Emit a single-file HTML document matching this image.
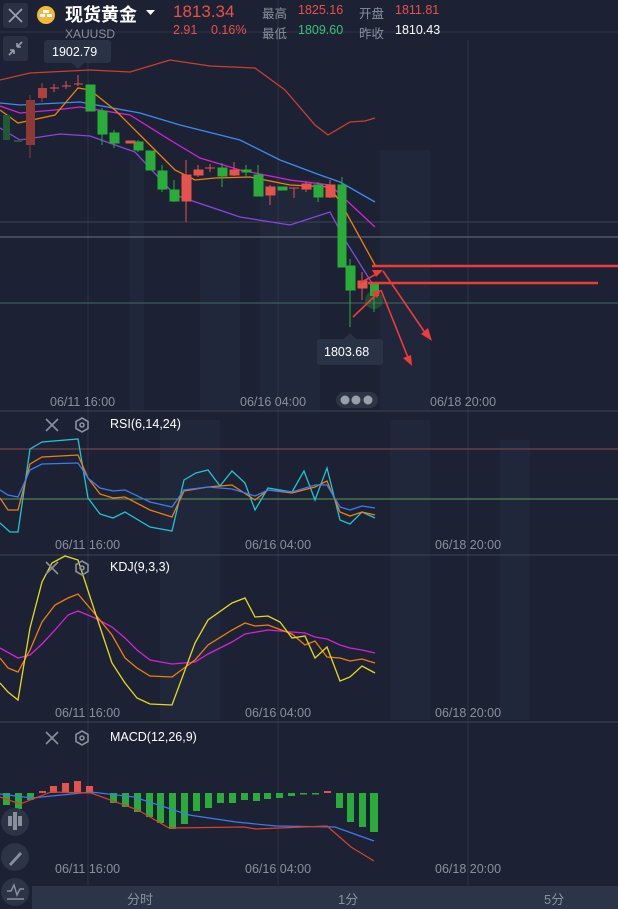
<!DOCTYPE html>
<html><head><meta charset="utf-8"><style>
html,body{margin:0;padding:0;background:#1c2234;}
body{width:618px;height:909px;position:relative;overflow:hidden;font-family:"Liberation Sans","Noto Sans CJK SC",sans-serif;}
.t{position:absolute;white-space:nowrap;}
</style></head><body>
<svg width="618" height="909" style="position:absolute;left:0;top:0" xmlns="http://www.w3.org/2000/svg">
<rect width="618" height="909" fill="#1c2234"/>
<g fill="#20273a">
<rect x="130" y="160" width="14" height="250"/><rect x="200" y="240" width="40" height="170"/><rect x="260" y="180" width="60" height="230"/><rect x="380" y="150" width="50" height="260"/><rect x="160" y="420" width="60" height="300"/><rect x="390" y="420" width="40" height="300"/><rect x="500" y="440" width="30" height="280"/>
</g>
<g stroke="#2c3446" stroke-width="1">
<line x1="88" y1="40" x2="88" y2="885"/><line x1="278" y1="0" x2="278" y2="885"/><line x1="468" y1="40" x2="468" y2="885"/>
<line x1="0" y1="32" x2="618" y2="32"/>
</g>
<line x1="0" y1="222" x2="618" y2="222" stroke="#3a4152"/>
<line x1="0" y1="237" x2="618" y2="237" stroke="#6b717d"/>
<line x1="0" y1="303" x2="618" y2="303" stroke="#3f6a66"/>
<g stroke="#3d4456"><line x1="0" y1="411" x2="618" y2="411"/><line x1="0" y1="555" x2="618" y2="555"/><line x1="0" y1="722" x2="618" y2="722"/></g>
<line x1="0" y1="449" x2="618" y2="449" stroke="#8a4d52"/>
<line x1="0" y1="499" x2="618" y2="499" stroke="#5a9a5a"/>
<g fill="none" stroke-width="1.3">
<polyline stroke="#c8402e" points="0,80 30,73 90,70 130,72 170,60 210,66 255,68 285,90 315,125 328,135 350,122 365,121 375,118"/>
<polyline stroke="#3d8bf0" points="0,103 20,105 80,102 140,113 180,125 240,140 280,160 320,175 340,182 375,202"/>
<polyline stroke="#d422d4" points="0,106 20,113 55,110 80,107 130,115 170,140 200,158 240,170 290,180 330,185 375,227"/>
<polyline stroke="#8a45e0" points="0,128 20,140 60,134 90,136 135,152 175,195 240,217 290,225 330,212 345,240 375,288"/>
<polyline stroke="#f07e10" points="0,110 18,123 55,115 78,88 90,90 115,110 140,135 175,170 195,180 215,178 250,177 290,185 330,187 342,205 375,265"/>
</g>
<g>
<rect x="3" y="115" width="7" height="25" fill="#1f5a34"/>
<rect x="14" y="140" width="8" height="2" fill="#1f5a34"/>
<line x1="30" y1="95" x2="30" y2="158" stroke="#8b3a36"/><rect x="26" y="100" width="9" height="45" fill="#8b3a36"/>
<line x1="42" y1="83" x2="42" y2="102" stroke="#b04040"/><rect x="38" y="88" width="9" height="10" fill="#b04040"/>
<g stroke="#e5534b"><line x1="50" y1="88" x2="59" y2="88"/><line x1="54" y1="84" x2="54" y2="92"/><line x1="62" y1="86" x2="71" y2="86"/><line x1="66" y1="81" x2="66" y2="89"/><line x1="74" y1="84" x2="83" y2="84"/><line x1="78" y1="75" x2="78" y2="86"/></g>
</g>
<g fill="#2aac3a" stroke="#2aac3a">
<rect x="86" y="85" width="9" height="26"/>
<line x1="102" y1="108" x2="102" y2="145"/><rect x="98" y="111" width="9" height="23"/>
<line x1="114" y1="130" x2="114" y2="148"/><rect x="110" y="133" width="9" height="10"/>
<rect x="134" y="142" width="9" height="8"/><line x1="138" y1="140" x2="138" y2="152"/>
<rect x="146" y="151" width="9" height="19"/>
<rect x="158" y="171" width="9" height="18"/><line x1="162" y1="165" x2="162" y2="192"/>
<rect x="170" y="190" width="9" height="11"/><line x1="174" y1="180" x2="174" y2="202"/>
<rect x="218" y="168" width="9" height="8"/><line x1="222" y1="163" x2="222" y2="187"/>
<rect x="242" y="170" width="9" height="2"/><line x1="246" y1="165" x2="246" y2="178"/>
<rect x="254" y="175" width="9" height="21"/><line x1="258" y1="165" x2="258" y2="196"/>
<rect x="278" y="187" width="9" height="3"/>
<rect x="314" y="185" width="9" height="12"/><line x1="318" y1="182" x2="318" y2="202"/>
<rect x="338" y="185" width="8" height="82"/><line x1="342" y1="177" x2="342" y2="267"/>
<rect x="346" y="266" width="9" height="24"/><line x1="350" y1="259" x2="350" y2="327"/>
</g>
<g fill="#e5534b" stroke="#e5534b">
<rect x="126" y="141" width="9" height="2"/>
<line x1="186" y1="160" x2="186" y2="222"/><rect x="182" y="175" width="9" height="26"/>
<rect x="194" y="170" width="9" height="5"/><line x1="198" y1="165" x2="198" y2="177"/>
<line x1="205" y1="168" x2="215" y2="168"/><line x1="210" y1="164" x2="210" y2="172"/>
<rect x="230" y="170" width="9" height="5"/><line x1="234" y1="162" x2="234" y2="176"/>
<rect x="266" y="187" width="9" height="8"/><line x1="270" y1="185" x2="270" y2="205"/>
<line x1="289" y1="188" x2="299" y2="188"/><line x1="294" y1="188" x2="294" y2="198"/>
<rect x="302" y="184" width="9" height="5"/><line x1="306" y1="181" x2="306" y2="192"/>
<rect x="326" y="185" width="9" height="12"/><line x1="330" y1="180" x2="330" y2="198"/>
<rect x="358" y="281" width="9" height="7"/><line x1="362" y1="272" x2="362" y2="300"/>
</g>
<circle cx="374" cy="300" r="9" fill="#2aac3a" opacity="0.3"/>
<rect x="370" y="282" width="9" height="14" fill="#2aac3a"/><line x1="374" y1="282" x2="374" y2="312" stroke="#2aac3a"/>
<g stroke="#f03a3a" stroke-width="2.5" fill="none">
<line x1="372" y1="266" x2="618" y2="266"/><line x1="368" y1="283" x2="598" y2="283"/>
</g>
<g stroke="#f03a3a" stroke-width="1.6" fill="#f03a3a">
<line x1="383" y1="271" x2="428" y2="337"/><polygon points="432,341 421,334 428,328" stroke="none"/>
<line x1="381" y1="290" x2="409" y2="360"/><polygon points="412,366 403,358 411,355" stroke="none"/>
<line x1="360" y1="283" x2="380" y2="272"/><polygon points="383,270 372,270 376,277" stroke="none"/>
<line x1="353" y1="317" x2="378" y2="293"/><polygon points="381,290 371,292 377,298" stroke="none"/>
</g>
<rect x="44" y="40" width="67" height="23" rx="3" fill="#2a3246"/><polygon points="72,63 78,69 84,63" fill="#2a3246"/>
<polygon points="344,339 350,333 356,339" fill="#2a3246"/>
<rect x="317" y="339" width="66" height="26" rx="3" fill="#2a3246"/>
<rect x="336" y="392" width="42" height="16" rx="8" fill="#2c3446"/>
<g fill="#9aa0ab"><circle cx="345" cy="400" r="4.5"/><circle cx="356" cy="400" r="4.5"/><circle cx="368" cy="400" r="4.5"/></g>
<g fill="none" stroke-width="1.3">
<polyline stroke="#20c4d4" points="0,523 10,532 18,532 30,449 42,442 78,439 88,498 100,514 113,518 125,512 150,527 172,531 184,480 196,473 208,470 220,486 232,471 245,483 255,510 268,488 292,492 304,471 315,500 327,468 340,520 350,524 362,512 375,518"/>
<polyline stroke="#f07e10" points="0,498 8,510 18,510 30,464 42,457 78,455 88,478 100,494 113,498 125,497 150,510 172,517 184,491 208,487 232,485 255,500 268,490 292,493 315,487 327,481 340,512 350,516 362,512 375,515"/>
<polyline stroke="#3d7bf0" points="0,490 8,495 18,497 30,470 42,464 78,463 88,478 100,488 113,491 125,490 150,502 172,507 184,490 208,487 232,489 255,496 268,490 292,492 315,485 327,485 340,507 350,510 362,506 375,508"/>
</g>
<g fill="none" stroke-width="1.3">
<polyline stroke="#d422d4" points="0,648 18,658 30,655 42,644 55,630 68,615 78,611 95,618 112,627 125,638 137,650 150,660 172,664 195,662 208,654 232,642 245,634 268,630 292,632 305,633 315,637 327,639 340,645 350,648 362,650 375,653"/>
<polyline stroke="#f07e10" points="0,658 8,668 18,672 30,650 42,622 55,605 68,598 78,594 95,614 112,635 125,658 137,668 150,676 172,677 195,660 208,645 232,630 245,623 255,626 268,625 292,634 305,645 315,641 327,657 340,658 350,661 362,659 375,663"/>
<polyline stroke="#e8d820" points="0,683 8,692 18,700 30,628 42,582 52,563 65,556 78,560 95,612 112,663 125,683 137,698 150,704 172,705 195,643 208,620 232,603 245,598 255,617 268,616 280,622 292,638 305,636 315,658 327,647 340,681 350,677 362,666 375,673"/>
</g>
<g fill="#2aac3a">
<rect x="3" y="793" width="7" height="12"/><rect x="15" y="793" width="7" height="16"/><rect x="27" y="793" width="7" height="7"/>
<rect x="110" y="793" width="7" height="10"/><rect x="122" y="793" width="7" height="14"/><rect x="134" y="793" width="7" height="19"/><rect x="146" y="793" width="7" height="24"/><rect x="157" y="793" width="7" height="30"/><rect x="169" y="793" width="7" height="36"/><rect x="181" y="793" width="7" height="31"/><rect x="193" y="793" width="7" height="18"/><rect x="205" y="793" width="7" height="15"/><rect x="217" y="793" width="7" height="10"/><rect x="229" y="793" width="7" height="10"/><rect x="241" y="793" width="7" height="7"/><rect x="253" y="793" width="7" height="8"/><rect x="264" y="793" width="7" height="6"/><rect x="276" y="793" width="7" height="5"/><rect x="288" y="793" width="7" height="3"/><rect x="300" y="793" width="7" height="1.5"/><rect x="312" y="793" width="7" height="1.5"/>
<rect x="336" y="793" width="7" height="15"/><rect x="347" y="793" width="7" height="29"/><rect x="359" y="793" width="7" height="34"/><rect x="370" y="793" width="8" height="39"/>
</g>
<g fill="#e5534b">
<rect x="39" y="791" width="7" height="2"/><rect x="50" y="786" width="7" height="7"/><rect x="62" y="783" width="7" height="10"/><rect x="74" y="781" width="7" height="12"/><rect x="86" y="786" width="7" height="7"/><rect x="324" y="791" width="7" height="2"/>
</g>
<g fill="none" stroke-width="1.2">
<polyline stroke="#3d7bf0" points="0,794 32,798 91,792 134,797 189,815 236,822 276,826 335,827 374,841"/>
<polyline stroke="#d8402e" points="0,797 20,804 51,792 91,793 138,810 169,828 244,827 256,829 327,826 351,847 374,861"/>
</g>
<rect x="3" y="3" width="25" height="25" rx="3" fill="#2a3142"/>
<path d="M9 9 L22 22 M22 9 L9 22" stroke="#9aa0ab" stroke-width="1.8"/>
<rect x="3" y="36" width="25" height="25" rx="3" fill="#2a3142"/>
<path d="M9 55 L14 50 M14 50 L14 54 M14 50 L10 50 M22 42 L17 47 M17 47 L17 43 M17 47 L21 47" stroke="#9aa0ab" stroke-width="1.6" fill="none"/>
<circle cx="46" cy="15" r="9" fill="#f0b93a"/>
<rect x="43" y="10" width="6" height="3" fill="#fff"/><rect x="40" y="14" width="5" height="3" fill="#fff"/><rect x="47" y="14" width="5" height="3" fill="#fff"/>
<polygon points="146,10 155,10 150.5,15" fill="#fff"/>
<g stroke="#8a909b" stroke-width="1.6" fill="none">
<path d="M46 419 L58 431 M58 419 L46 431"/><path d="M46 562 L58 574 M58 562 L46 574"/><path d="M46 732 L58 744 M58 732 L46 744"/>
<polygon points="82,418 88,421.5 88,428.5 82,432 76,428.5 76,421.5"/><circle cx="82" cy="425" r="2"/>
<polygon points="82,561 88,564.5 88,571.5 82,575 76,571.5 76,564.5"/><circle cx="82" cy="568" r="2"/>
<polygon points="82,731 88,734.5 88,741.5 82,745 76,741.5 76,734.5"/><circle cx="82" cy="738" r="2"/>
</g>
<g fill="#2c3446"><circle cx="15" cy="822" r="14"/><circle cx="15" cy="857" r="14"/><circle cx="15" cy="892" r="14"/></g>
<g fill="#8a909b"><rect x="8" y="816" width="4" height="10"/><rect x="13" y="812" width="4" height="18"/><rect x="18" y="816" width="4" height="10"/></g>
<path d="M9 864 L20 852 L22 854 L11 866 Z" fill="#8a909b"/>
<path d="M7 891 L11 891 L14 885 L17 895 L20 889 L24 889 M7 899 L24 899" stroke="#8a909b" stroke-width="1.5" fill="none"/>
<rect x="32" y="886" width="586" height="23" fill="#2c3448"/>
</svg>
<div class="t" style="left:65px;top:1px;font-size:18px;color:#fff;font-weight:bold">现货黄金</div>
<div class="t" style="left:65px;top:27px;font-size:12px;color:#8a909b">XAUUSD</div>
<div class="t" style="left:173px;top:2px;font-size:17px;color:#e8504a">1813.34</div>
<div class="t" style="left:173px;top:23px;font-size:12.5px;color:#e8504a">2.91</div>
<div class="t" style="left:211px;top:23px;font-size:12.5px;color:#e8504a">0.16%</div>
<div class="t" style="left:262px;top:3px;font-size:12.5px;color:#8a909b">最高</div>
<div class="t" style="left:298px;top:3px;font-size:12.5px;color:#e8504a">1825.16</div>
<div class="t" style="left:359px;top:3px;font-size:12.5px;color:#8a909b">开盘</div>
<div class="t" style="left:395px;top:3px;font-size:12.5px;color:#e8504a">1811.81</div>
<div class="t" style="left:262px;top:23px;font-size:12.5px;color:#8a909b">最低</div>
<div class="t" style="left:298px;top:23px;font-size:12.5px;color:#3cc07a">1809.60</div>
<div class="t" style="left:359px;top:23px;font-size:12.5px;color:#8a909b">昨收</div>
<div class="t" style="left:395px;top:23px;font-size:12.5px;color:#fff">1810.43</div>
<div class="t" style="left:52px;top:45px;font-size:12.5px;color:#fff">1902.79</div>
<div class="t" style="left:324px;top:345px;font-size:12.5px;color:#fff">1803.68</div>
<div class="t" style="left:50px;top:395px;font-size:12.5px;color:#8a909b">06/11 16:00</div>
<div class="t" style="left:240px;top:395px;font-size:12.5px;color:#8a909b">06/16 04:00</div>
<div class="t" style="left:430px;top:395px;font-size:12.5px;color:#8a909b">06/18 20:00</div>
<div class="t" style="left:110px;top:417px;font-size:12.5px;color:#fff">RSI(6,14,24)</div>
<div class="t" style="left:55px;top:538px;font-size:12.5px;color:#8a909b">06/11 16:00</div>
<div class="t" style="left:245px;top:538px;font-size:12.5px;color:#8a909b">06/16 04:00</div>
<div class="t" style="left:435px;top:538px;font-size:12.5px;color:#8a909b">06/18 20:00</div>
<div class="t" style="left:110px;top:560px;font-size:12.5px;color:#fff">KDJ(9,3,3)</div>
<div class="t" style="left:55px;top:706px;font-size:12.5px;color:#8a909b">06/11 16:00</div>
<div class="t" style="left:245px;top:706px;font-size:12.5px;color:#8a909b">06/16 04:00</div>
<div class="t" style="left:435px;top:706px;font-size:12.5px;color:#8a909b">06/18 20:00</div>
<div class="t" style="left:110px;top:730px;font-size:12.5px;color:#fff">MACD(12,26,9)</div>
<div class="t" style="left:55px;top:862px;font-size:12.5px;color:#8a909b">06/11 16:00</div>
<div class="t" style="left:245px;top:862px;font-size:12.5px;color:#8a909b">06/16 04:00</div>
<div class="t" style="left:435px;top:862px;font-size:12.5px;color:#8a909b">06/18 20:00</div>
<div class="t" style="left:127px;top:889px;font-size:13px;color:#8a909b">分时</div>
<div class="t" style="left:338px;top:889px;font-size:13px;color:#8a909b">1分</div>
<div class="t" style="left:544px;top:889px;font-size:13px;color:#8a909b">5分</div>
</body></html>
